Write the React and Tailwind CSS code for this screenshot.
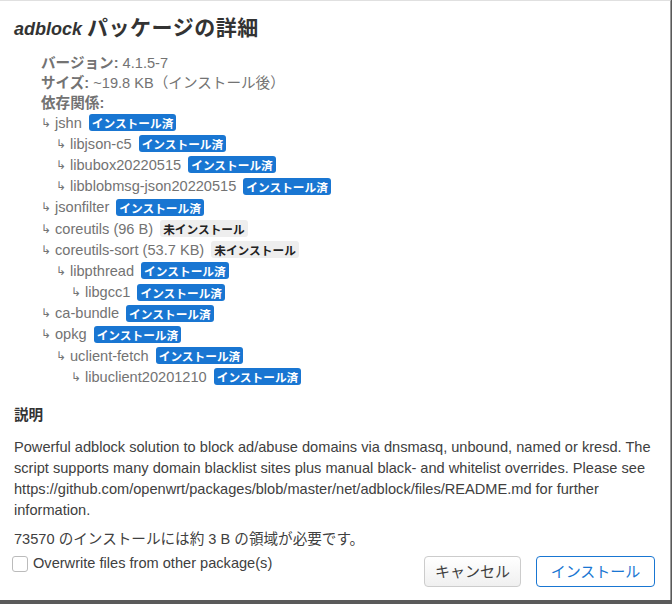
import React from "react";

const deps = [
  { name: "jshn", level: 0, installed: true },
  { name: "libjson-c5", level: 1, installed: true },
  { name: "libubox20220515", level: 1, installed: true },
  { name: "libblobmsg-json20220515", level: 1, installed: true },
  { name: "jsonfilter", level: 0, installed: true },
  { name: "coreutils (96 B)", level: 0, installed: false },
  { name: "coreutils-sort (53.7 KB)", level: 0, installed: false },
  { name: "libpthread", level: 1, installed: true },
  { name: "libgcc1", level: 2, installed: true },
  { name: "ca-bundle", level: 0, installed: true },
  { name: "opkg", level: 0, installed: true },
  { name: "uclient-fetch", level: 1, installed: true },
  { name: "libuclient20201210", level: 2, installed: true },
];

const indent = ["pl-0", "pl-[15px]", "pl-[30px]"];

function Badge({ installed }) {
  if (installed) {
    return (
      <span className="ml-[7px] inline-block rounded-[3px] bg-[#1976d2] px-[3px] font-['Noto_Sans_CJK_JP'] text-[11.7px] leading-[17px] font-bold text-white">
        インストール済
      </span>
    );
  }
  return (
    <span className="ml-[7px] inline-block rounded-[3px] bg-[#eeeeee] px-[3px] font-['Noto_Sans_CJK_JP'] text-[11.7px] leading-[17px] font-bold text-[#222]">
      未インストール
    </span>
  );
}

export default function App() {
  return (
    <div className="relative h-[604px] w-[672px] overflow-hidden bg-[#5a5a5a] font-['Liberation_Sans','Noto_Sans_CJK_JP',sans-serif]">
      <div className="h-[600px] w-[671px] border-t border-r border-t-[#e0e0e0] border-r-[#9a9a9a] bg-white px-[14px] pt-[14px]">
        <h3 className="text-[18px] leading-[26px] font-bold text-[#333]">
          <i>adblock</i> <span className="text-[21px] tracking-[0.5px]">パッケージの詳細</span>
        </h3>

        <div className="mt-[11px] ml-[27px] text-[14.6px] leading-[20px] text-[#737373]">
          <div>
            <strong>バージョン:</strong> 4.1.5-7
          </div>
          <div>
            <strong>サイズ:</strong> ~19.8 KB（インストール後）
          </div>
          <div>
            <strong>依存関係:</strong>
          </div>
          <ul className="-mt-[1px]">
            {deps.map((d) => (
              <li
                key={d.name}
                className={`flex h-[21.2px] items-center ${indent[d.level]}`}
              >
                <span className="w-[14px] text-[12px]">↳</span>
                <span>{d.name}</span>
                <Badge installed={d.installed} />
              </li>
            ))}
          </ul>
        </div>

        <h4 className="mt-[18px] text-[14.6px] leading-[20px] font-bold text-[#333]">説明</h4>
        <p className="mt-[12px] text-[14.6px] leading-[21px] text-[#404040]">
          Powerful adblock solution to block ad/abuse domains via dnsmasq, unbound, named or
          kresd. The script supports many domain blacklist sites plus manual black- and
          whitelist overrides. Please see
          https://github.com/openwrt/packages/blob/master/net/adblock/files/README.md for
          further information.
        </p>
        <p className="mt-[8px] text-[14.6px] leading-[21px] text-[#404040]">
          73570 のインストールには約 3 B の領域が必要です。
        </p>

        <div className="mt-[3px] flex items-start justify-between">
          <label className="flex items-center gap-[5px] text-[14.6px] text-[#404040]">
            <span className="ml-[-2px] inline-block h-[16px] w-[16px] rounded-[3px] border border-[#bbb] bg-white" />
            Overwrite files from other package(s)
          </label>
          <div className="mt-[3px] flex gap-[15px] pr-[1px]">
            <button className="h-[31px] w-[97px] rounded-[4px] border border-[#ccc] bg-gradient-to-b from-white to-[#f0f0f0] text-[15px] text-[#404040]">
              キャンセル
            </button>
            <button className="h-[31px] w-[119px] rounded-[4px] border border-[#1976d2] bg-white text-[15px] text-[#1976d2]">
              インストール
            </button>
          </div>
        </div>
      </div>
    </div>
  );
}
